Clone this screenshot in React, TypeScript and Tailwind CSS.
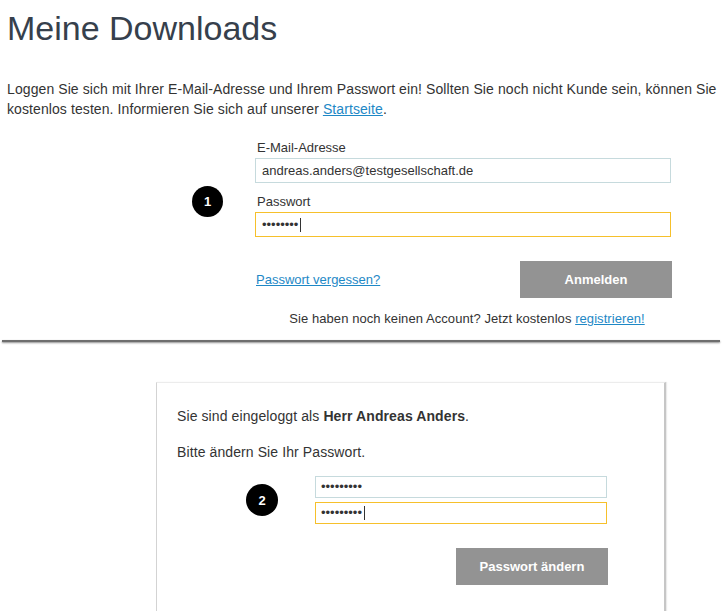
import React from 'react';

const Badge: React.FC<{ n: string; className?: string }> = ({ n, className = '' }) => (
  <div
    className={`flex items-center justify-center rounded-full bg-black text-white font-bold text-[13px] leading-none flex-shrink-0 ${className}`}
  >
    {n}
  </div>
);

const Field: React.FC<{
  value: string;
  focused?: boolean;
  className?: string;
}> = ({ value, focused = false, className = '' }) => (
  <div
    className={`flex items-center bg-white border pl-[6px] text-[13px] text-[#333] ${
      focused ? 'border-[#f6c02b]' : 'border-[#c6dadd]'
    } ${className}`}
  >
    <span>{value}</span>
    {focused && <span className="ml-[2px] w-px h-[14px] bg-[#333]" />}
  </div>
);

export default function App() {
  return (
    <div className="w-[723px] h-[611px] overflow-hidden bg-white font-['Liberation_Sans',Arial,sans-serif] text-[#333]">
      {/* Login block */}
      <h1 className="mt-[8px] pl-[7px] text-[34px] leading-[40px] text-[#36404c] font-normal">
        Meine Downloads
      </h1>
      <p className="mt-[31px] pl-[7px] text-[14px] leading-[20px] tracking-[0.09px]">
        Loggen Sie sich mit Ihrer E-Mail-Adresse und Ihrem Passwort ein! Sollten Sie noch nicht Kunde sein, können Sie
        <br />
        kostenlos testen. Informieren Sie sich auf unserer{' '}
        <a className="text-[#1e88c6] underline">Startseite</a>.
      </p>

      <div className="mt-[21px] flex items-start pl-[192px]">
        <Badge n="1" className="w-[31px] h-[31px] mt-[46px]" />
        <div className="ml-[32px] w-[417px]">
          <label className="block pl-[2px] text-[13px] leading-[16px] mb-[2px]">E-Mail-Adresse</label>
          <Field value="andreas.anders@testgesellschaft.de" className="w-[416px] h-[25px]" />
          <label className="block pl-[2px] mt-[11px] text-[13px] leading-[16px] mb-[2px]">Passwort</label>
          <Field value="••••••••" focused className="w-[416px] h-[25px]" />

          <div className="mt-[24px] flex items-center justify-between">
            <a className="ml-[1px] text-[13px] text-[#1e88c6] underline">Passwort vergessen?</a>
            <button className="w-[152px] h-[37px] bg-[#939393] text-white font-bold text-[13px]">
              Anmelden
            </button>
          </div>
          <p className="mt-[13px] text-center text-[13px] leading-[16px] pl-[7px] tracking-[0.07px]">
            Sie haben noch keinen Account? Jetzt kostenlos{' '}
            <a className="text-[#1e88c6] underline">registrieren!</a>
          </p>
        </div>
      </div>

      {/* edge of the upper screenshot */}
      <div className="mt-[13px] ml-[2px] w-[718px] h-[2px] bg-[#6e6e6e] shadow-[0_1px_2px_rgba(0,0,0,0.45)]" />

      {/* Change password card */}
      <div className="mt-[40px] ml-[156px] w-[510px] h-[300px] border-l border-t border-r-2 border-l-[#d3d3d3] border-t-[#ececec] border-r-[#c6c6c6] shadow-[1px_0_1px_rgba(0,0,0,0.08)] pt-[23px] pl-[20px]">
        <p className="text-[14px] leading-[20px] tracking-[0.1px]">
          Sie sind eingeloggt als <b className="font-bold">Herr Andreas Anders</b>.
        </p>
        <p className="mt-[16px] text-[14px] leading-[20px] tracking-[0.1px]">Bitte ändern Sie Ihr Passwort.</p>

        <div className="mt-[14px] flex items-center pl-[69px]">
          <Badge n="2" className="w-[32px] h-[32px]" />
          <div className="ml-[37px] w-[293px] flex flex-col">
            <Field value="•••••••••" className="w-[292px] h-[22px] !pl-[5px]" />
            <Field value="•••••••••" focused className="mt-[4px] w-[292px] h-[22px] !pl-[5px]" />
          </div>
        </div>
        <div className="mt-[24px] ml-[279px] w-[152px]">
          <button className="w-[152px] h-[37px] bg-[#939393] text-white font-bold text-[13px]">
            Passwort ändern
          </button>
        </div>
      </div>
    </div>
  );
}
